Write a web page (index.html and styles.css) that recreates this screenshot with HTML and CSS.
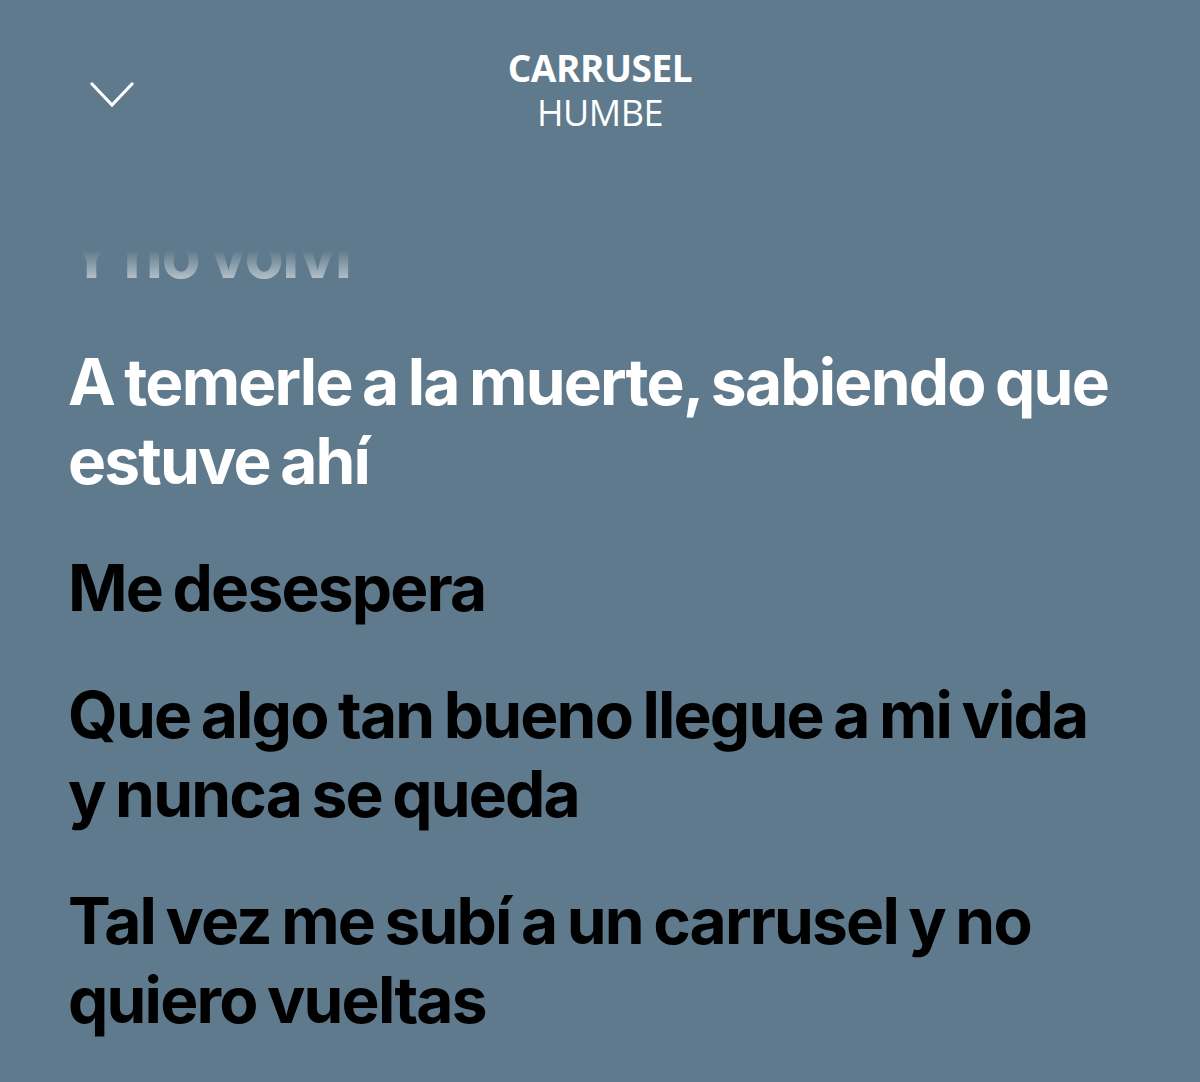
FILE: index.html
```html
<!DOCTYPE html>
<html lang="es">
<head>
    <meta charset="UTF-8">
    <meta name="viewport" content="width=device-width, initial-scale=1.0">
    <title>Carrusel - Humbe</title>
    <link rel="stylesheet" href="styles.css">
</head>
<body>
    <div class="player-header">
        <span class="close-btn">
            <svg width="46" height="28" viewBox="0 0 46 28">
                <polyline points="3,2 23,23 43,2" fill="none" stroke="#fff" stroke-width="3.2" stroke-linecap="round" stroke-linejoin="miter"/>
            </svg>
        </span>
        <div class="track-info">
            <div class="track-title">CARRUSEL</div>
            <div class="track-artist">HUMBE</div>
        </div>
    </div>

    <div class="lyrics">
        <div class="lyrics-list">
            <p class="line past">Y no volví</p>
            <p class="line active">A temerle a la muerte, sabiendo que estuve ahí</p>
            <p class="line">Me desespera</p>
            <p class="line">Que algo tan bueno llegue a mi vida y nunca se queda</p>
            <p class="line">Tal vez me subí a un carrusel y no quiero vueltas</p>
        </div>
    </div>
</body>
</html>
```

FILE: styles.css
```css
body {
    margin: 0;
    height: 1082px;
    overflow: hidden;
    background-color: #5e7a8c;
    font-family: "Open Sans", sans-serif;
}
.player-header {
    display: flex;
    height: 250px;
    position: relative;
}
.close-btn {
    position: absolute;
    left: 89px;
    top: 82px;
    display: block;
    line-height: 0;
}
.track-info {
    margin: 46px auto 0;
    text-align: center;
    color: #fff;
}
.track-title {
    font-size: 37px;
    font-weight: 700;
    line-height: 44px;
    letter-spacing: -0.4px;
}
.track-artist {
    font-size: 36px;
    font-weight: 400;
    line-height: 46px;
    letter-spacing: -0.5px;
}
.lyrics {
    height: 832px;
    overflow: hidden;
    padding: 0 80px 0 68px;
    -webkit-mask-image: linear-gradient(to bottom, transparent 0, rgba(0,0,0,0.55) 30px, #000 70px);
    mask-image: linear-gradient(to bottom, transparent 0, rgba(0,0,0,0.55) 30px, #000 70px);
}
.lyrics-list {
    margin-top: -35px;
}
.line {
    margin: 0 0 48px;
    font-family: Inter, sans-serif;
    font-size: 64px;
    font-weight: 700;
    line-height: 79px;
    letter-spacing: -1.8px;
    word-spacing: -3px;
    color: #000;
}
.line.active,
.line.past {
    color: #fff;
}
```
